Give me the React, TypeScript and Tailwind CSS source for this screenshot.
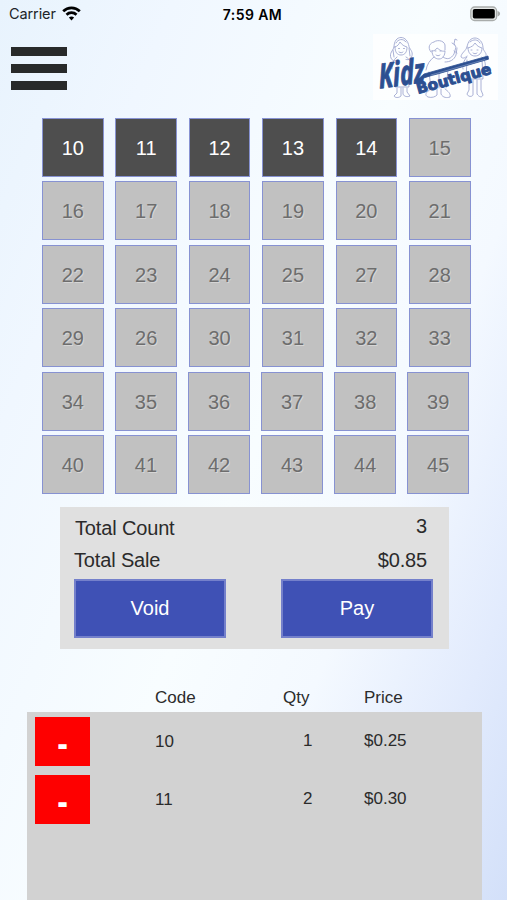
import { clsx } from 'clsx';

type Item = {
  code: number;
  qty: number;
  price: string;
};

const codeRows = [
  [10, 11, 12, 13, 14, 15],
  [16, 17, 18, 19, 20, 21],
  [22, 23, 24, 25, 27, 28],
  [29, 26, 30, 31, 32, 33],
  [34, 35, 36, 37, 38, 39],
  [40, 41, 42, 43, 44, 45],
];

const enabledCodes = [10, 11, 12, 13, 14];

const items: Item[] = [
  { code: 10, qty: 1, price: '$0.25' },
  { code: 11, qty: 2, price: '$0.30' },
];

function StatusBar() {
  return (
    <div className="grid h-7 grid-cols-3 items-center pl-[8px] pr-[6px] text-black">
      <div className="flex items-center gap-[6px] pl-px">
        <span className="font-['Inter'] text-[14.5px] tracking-[-0.1px] text-[#202428]">Carrier</span>
        <svg width="19" height="15" viewBox="0 0 19 15" fill="none" stroke="#000" strokeWidth="2.7" className="-mt-px">
          <path d="M1.2 5.3a11.8 11.8 0 0 1 16.6 0" />
          <path d="M4.5 8.7a7.1 7.1 0 0 1 10 0" />
          <path d="M9.5 14.4 6.9 11.6a3.8 3.8 0 0 1 5.2 0z" fill="#000" stroke="none" />
        </svg>
      </div>
      <div className="pr-1 text-center font-['Inter'] text-[14px] font-semibold tracking-[0.4px]">7:59 AM</div>
      <div className="flex justify-end">
        <svg width="31" height="16" viewBox="0 0 31 16" className="-mt-px">
          <rect x="0.8" y="1" width="25.8" height="13.5" rx="3.8" fill="#e4e7e6" stroke="#a9acab" strokeWidth="1.3" />
          <rect x="2.8" y="3" width="22" height="9.5" rx="1.8" fill="#000" />
          <path d="M27.5 5v5.4c1.7-.5 2.6-1.6 2.6-2.7S29.2 5.5 27.5 5z" fill="#a9acab" />
        </svg>
      </div>
    </div>
  );
}

function Logo() {
  return (
    <svg width="125" height="66" viewBox="373 34 125 66" fill="none" strokeLinecap="round" strokeLinejoin="round">
      <rect x="373" y="34" width="125" height="66" fill="#fff" fillOpacity="0.75" />
      <g stroke="#a0a8d0" strokeWidth="0.9">
        {/* left girl */}
        <path d="M394 47c0-6 3-9.5 7-9.5s7 3.5 8 9c1 3 4 5 3 9-1 4-3 4.5-6 4M394 47c-1 4-5 6-3 11 1 3 4 3 6 2M395 47c3-1 4-3 5-5 2 3 4 4 7 5 0 5-2 8-6 8s-6-3-6-8z" />
        <path d="M396 43c2-4 7-5 10-1M409 48l1 8M393 50l1 7" />
        <path d="M397 57c-4 3-5 7-5 12M406 57c4 2 6 6 6 12M396 70l-1 17h14l-1-17M397 88v5l-3 3c1 2 5 2 7 0v-8M403 88v6c1 3 5 3 7 2l-3-4v-4" />
        <path d="M398.5 48.5h1M403.5 48.5h1M399 52c1.5 1 3 1 4 0" />
        {/* boy */}
        <path d="M431 52c-4-5-1-9 3-10 4-3 12-1 11 5v3M432 51c0 5 3 8 7 8s6-4 6-8c-4 1-6-2-8-3-1 2-3 3-5 3z" />
        <path d="M434 57c-4 3-7 7-8 13M443 57c4 3 8 2 11-3l2-7-2-3 1-5 2 1M457 48l-1 7c-2 5-6 7-11 7M454 51l3 2M429 72l2 16M448 70l-2 18M439 74v14M452 43l3 2" />
        <path d="M435 51h1M440 51h1M436 55c1 1 3 1 4 0M431 89c-5 3-7 6-3 8 4 1 7 0 9-2v-6M441 89v5c2 4 6 4 9 3 1-3-2-6-5-8" />
        {/* right girl */}
        <path d="M467 47c1-6 4-9 8-9s8 4 8 10c1 4 4 5 3 8M467 47c-1 4-6 6-6 10 2 2 4 1 6-1M468 48c4-1 6-3 7-5 2 3 4 4 7 5 0 5-3 8-7 8s-7-3-7-8z" />
        <path d="M470 42c3-3 8-3 10 1M467 57c-3 3-5 8-4 12M482 57c3 3 4 7 3 12M467 60l-1 19h17l-1-20M469 80v10l-2 4c1 3 5 3 6 1v-15M477 80v14c2 3 5 4 6 1l-2-5v-10" />
        <path d="M471 50h1M477 50h1M473 53c1 1 3 1 4 0" />
      </g>
      <text
        transform="translate(379.5 88.5) rotate(-8) skewX(-4)"
        fill="#2c4f91"
        stroke="#2c4f91"
        strokeWidth="0.9"
        textLength="46"
        lengthAdjust="spacingAndGlyphs"
        className="font-['Open_Sans'] text-[34px] font-bold italic"
      >
        Kidz
      </text>
      <path d="M416 81l8-7 64-18 .5 3.2-50 14.500c-8 2-15 4-22.5 7.3z" fill="#2c4f91" stroke="#2c4f91" strokeWidth="0.8" />
      <path d="M431 75l54-15.5" stroke="#8fa3ca" strokeWidth="0.6" />
      <text
        transform="translate(418 94) rotate(-15.5)"
        fill="#2c4f91"
        stroke="#2c4f91"
        strokeWidth="1"
        textLength="77"
        lengthAdjust="spacingAndGlyphs"
        className="font-['DejaVu_Sans'] text-[15px] font-bold"
      >
        Boutique
      </text>
    </svg>
  );
}

function CodeButton({ code }: { code: number }) {
  const enabled = enabledCodes.includes(code);

  return (
    <button
      className={clsx(
        'h-[59px] w-[61.7px] shrink-0 border border-[#8792d2] pt-px text-[20px] leading-none',
        enabled ? 'bg-[#4e4e4e] text-white' : 'bg-[#c1c1c1] text-[#6d6d6d] [text-shadow:1px_1px_0_#d6d6d6]'
      )}
    >
      {code}
    </button>
  );
}

export default function App() {
  return (
    <div className="flex h-[900px] w-[507px] flex-col overflow-hidden bg-[linear-gradient(112deg,#e8f3fd_0%,#f0f7ff_20%,#f8fdff_50%,#f4f9ff_68%,#e2ebfd_86%,#d3e0f9_100%)] font-['Liberation_Sans',sans-serif] text-[#2b2b2b]">
      <StatusBar />

      <div className="flex justify-between pl-[11px] pr-[9px] pt-[6px]">
        <button className="mt-[13px] flex h-[43px] w-14 flex-col justify-between">
          <span className="h-[9px] w-full bg-[#282a2a]" />
          <span className="h-[9px] w-full bg-[#282a2a]" />
          <span className="h-[9px] w-full bg-[#282a2a]" />
        </button>
        <Logo />
      </div>

      <div className="mt-[18px] flex flex-col gap-[4.4px] pl-[42px]">
        {codeRows.map((row, i) => (
          <div key={i} className={clsx('flex', i < 4 ? 'gap-[11.7px]' : 'gap-[11.4px]')}>
            {row.map((code) => (
              <CodeButton key={code} code={code} />
            ))}
          </div>
        ))}
      </div>

      <div className="ml-[60px] mt-[13px] h-[142px] w-[389px] shrink-0 bg-[#e0e0e0] pl-[14px] pr-4 text-[20px] leading-8">
        <div className="flex h-8 justify-between pl-[1px] pr-[6px] pt-[5px]">
          <span className="tracking-[-0.15px]">Total Count</span>
          <span className="-mt-[2px]">3</span>
        </div>
        <div className="flex h-8 justify-between pr-[6px] pt-[5px]">
          <span className="tracking-[-0.15px]">Total Sale</span>
          <span className="tracking-[-0.15px]">$0.85</span>
        </div>
        <div className="mt-2 flex justify-between">
          <button className="h-[59px] w-[152px] border-2 border-[#7480cb] bg-[#3f51b5] text-white">Void</button>
          <button className="h-[59px] w-[152px] border-2 border-[#7480cb] bg-[#3f51b5] text-white">Pay</button>
        </div>
      </div>

      <div className="mt-[39px] grid shrink-0 grid-cols-[128px_81px_1fr] pl-[155px] text-[17px] leading-5">
        <span>Code</span>
        <span>Qty</span>
        <span>Price</span>
      </div>

      <div className="ml-[27px] mt-1 w-[455px] flex-1 bg-[#d2d2d2] pl-2 pt-[5px] text-[17px] leading-5">
        {items.map((item) => (
          <div key={item.code} className="grid h-[58.5px] grid-cols-[120px_148px_61px_1fr]">
            <button className="flex h-[49px] w-[55px] items-center justify-center bg-[#fe0000] pt-[3px] text-[32px] font-bold text-white">
              <span className="scale-y-125">-</span>
            </button>
            <span className="pt-[15px]">{item.code}</span>
            <span className="pt-[14px]">{item.qty}</span>
            <span className="pt-[14px]">{item.price}</span>
          </div>
        ))}
      </div>
    </div>
  );
}
